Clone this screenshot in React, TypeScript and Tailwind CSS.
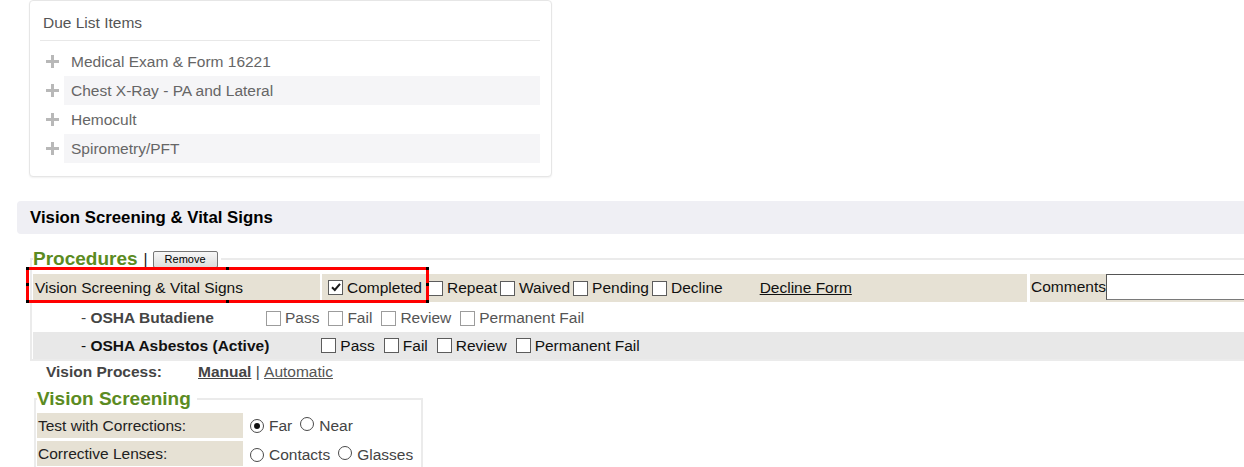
import React from "react";

const DUE_ITEMS = [
  "Medical Exam & Form 16221",
  "Chest X-Ray - PA and Lateral",
  "Hemocult",
  "Spirometry/PFT",
];

const RESULT_OPTIONS = ["Pass", "Fail", "Review", "Permanent Fail"];

function PlusIcon() {
  return (
    <svg width="13" height="13" viewBox="0 0 13 13" aria-hidden="true">
      <rect x="5" y="0" width="3" height="13" fill="#b8b8b8" />
      <rect x="0" y="5" width="13" height="3" fill="#b8b8b8" />
    </svg>
  );
}

function CheckBox({ checked = false, light = false }: { checked?: boolean; light?: boolean }) {
  return (
    <span
      className={
        light
          ? "inline-flex items-center justify-center w-[15px] h-[15px] shrink-0 border border-[#9c9c9c] bg-white"
          : "inline-flex items-center justify-center w-[15px] h-[15px] shrink-0 border border-[#5c5c5c] bg-white"
      }
    >
      {checked && (
        <svg width="12" height="12" viewBox="0 0 12 12" aria-hidden="true">
          <path d="M2 6.2 L4.8 9 L10 2.8" fill="none" stroke="#1a1a1a" strokeWidth="2" />
        </svg>
      )}
    </span>
  );
}

function Radio({ checked = false }: { checked?: boolean }) {
  return (
    <span className="inline-flex items-center justify-center w-[14px] h-[14px] shrink-0 rounded-full border border-[#4a4a4a] bg-white">
      {checked && <span className="w-[6px] h-[6px] rounded-full bg-[#111]" />}
    </span>
  );
}

function DueListCard() {
  return (
    <div className="ml-[29px] w-[523px] h-[177px] border border-[#e6e6e6] rounded-[4px] bg-white pl-[10px] pr-[11px] pt-[12px] shadow-[0_1px_2px_rgba(0,0,0,0.06)]">
      <div className="h-[20px] leading-[20px] pl-[3px] text-[#555] border-b border-[#e8e8e8] box-content pb-[7px]">
        Due List Items
      </div>
      <div className="mt-[6px]">
        {DUE_ITEMS.map((item, i) => (
          <div key={item} className="flex h-[29px]">
            <div className="w-[24px] flex items-center justify-center">
              <PlusIcon />
            </div>
            <div
              className={
                i % 2 === 1
                  ? "flex-1 flex items-center pl-[7px] text-[#666] bg-[#f5f5f7]"
                  : "flex-1 flex items-center pl-[7px] text-[#666]"
              }
            >
              {item}
            </div>
          </div>
        ))}
      </div>
    </div>
  );
}

function ResultRow({ label, shaded }: { label: string; shaded?: boolean }) {
  return (
    <div
      className={
        shaded
          ? "flex items-center h-[27px] pl-[48px] bg-[#e8e8e8] text-[#111]"
          : "flex items-center h-[28px] mt-[2px] pl-[48px] text-[#555]"
      }
    >
      <span className={shaded ? "text-[#111]" : "text-[#444]"}>
        - <b>{label}</b>
      </span>
      <div className="flex items-center ml-[52px]">
        {RESULT_OPTIONS.map((opt, i) => (
          <span key={opt} className={i === 0 ? "flex items-center" : "flex items-center ml-[9px]"}>
            <CheckBox light={!shaded} />
            <span className="ml-[4px]">{opt}</span>
          </span>
        ))}
      </div>
    </div>
  );
}

function Procedures() {
  const statuses = ["Repeat", "Waived", "Pending", "Decline"];
  return (
    <fieldset className="ml-[30px] mt-[14px] w-[1260px] border-2 border-[#ebebeb] pl-[1px] pt-[4px]">
      <legend className="h-[22px] flex items-center pl-0 pr-[3px]">
        <span className="text-[19px] font-bold text-[#5b8b22] leading-[22px]">Procedures</span>
        <span className="ml-[6px] text-[#111]">|</span>
        <button className="ml-[5px] w-[65px] h-[17px] text-[11px] leading-[15px] text-black border border-[#767676] rounded-[2px] bg-gradient-to-b from-[#f7f7f7] to-[#dddddd]">
          Remove
        </button>
      </legend>

      <div className="flex h-[28px] text-[#111]">
        <div className="w-[287px] flex items-center pl-[2px] bg-[#e6e1d4]">Vision Screening &amp; Vital Signs</div>
        <div className="ml-[2px] w-[705px] flex items-center bg-[#e6e1d4]">
          <span className="ml-[6px]">
            <CheckBox checked />
          </span>
          <span className="ml-[4px]">Completed</span>
          {statuses.map((s, i) => (
            <span key={s} className={i === 0 ? "flex items-center ml-[6px]" : "flex items-center ml-[3px]"}>
              <CheckBox />
              <span className="ml-[4px]">{s}</span>
            </span>
          ))}
          <span className="ml-[37px] underline">Decline Form</span>
        </div>
        <div className="ml-[3px] flex-1 flex items-start bg-[#e6e1d4]">
          <span className="pl-[1px] h-[28px] leading-[26px]">Comments</span>
          <input
            readOnly
            className="w-[220px] h-[26px] border border-[#7a7a7a] border-t-[#555] border-l-[#555] bg-white"
          />
        </div>
      </div>

      <ResultRow label="OSHA Butadiene" />
      <ResultRow label="OSHA Asbestos (Active)" shaded />
    </fieldset>
  );
}

function VisionScreening() {
  return (
    <fieldset className="ml-[34px] mt-[5px] w-[389px] border-2 border-[#ebebeb] pl-[1px] pt-[3px] pb-[10px]">
      <legend className="pl-0 pr-[6px] text-[19px] leading-[22px] font-bold text-[#5b8b22]">Vision Screening</legend>
      <div className="flex h-[25px]">
        <div className="w-[206px] flex items-center pl-[1px] bg-[#e6e1d4] text-[#222]">Test with Corrections:</div>
        <div className="ml-[2px] flex items-center pl-[5px] text-[#444]">
          <Radio checked />
          <span className="ml-[5px]">Far</span>
          <span className="ml-[8px]">
            <Radio />
          </span>
          <span className="ml-[5px]">Near</span>
        </div>
      </div>
      <div className="flex h-[25px] mt-[3px]">
        <div className="w-[206px] flex items-center pl-[1px] bg-[#e6e1d4] text-[#222]">Corrective Lenses:</div>
        <div className="ml-[2px] flex items-center pl-[5px] pt-[3px] text-[#444]">
          <Radio />
          <span className="ml-[5px]">Contacts</span>
          <span className="ml-[8px]">
            <Radio />
          </span>
          <span className="ml-[5px]">Glasses</span>
        </div>
      </div>
    </fieldset>
  );
}

export default function App() {
  return (
    <div className="relative w-[1244px] h-[467px] overflow-hidden bg-white text-[15.5px] font-['Liberation_Sans',Arial,sans-serif]">
      <DueListCard />

      <div className="ml-[17px] mt-[24px] h-[33px] flex items-center pl-[13px] bg-[#efeff4] rounded-l-[4px] text-[16.8px] font-bold text-black">
        Vision Screening &amp; Vital Signs
      </div>

      <Procedures />

      <div className="h-[22px] flex items-center pl-[46px] text-[#444]">
        <b>Vision Process:</b>
        <b className="ml-[36px] underline">Manual</b>
        <span className="whitespace-pre"> | </span>
        <span className="underline text-[#555]">Automatic</span>
      </div>

      <VisionScreening />

      {/* selection overlay around the first procedure row */}
      <div className="absolute left-[26px] top-[267px] w-[403px] h-[36px] border-[3px] border-[#ff0000]">
        <span className="absolute -left-[3px] -top-[3px] w-[3px] h-[3px] bg-black" />
        <span className="absolute -right-[3px] -top-[3px] w-[3px] h-[3px] bg-black" />
        <span className="absolute -left-[3px] -bottom-[3px] w-[3px] h-[3px] bg-black" />
        <span className="absolute -right-[3px] -bottom-[3px] w-[3px] h-[3px] bg-black" />
        <span className="absolute left-[197px] -top-[3px] w-[3px] h-[3px] bg-black" />
        <span className="absolute left-[197px] -bottom-[3px] w-[3px] h-[3px] bg-black" />
        <span className="absolute -left-[3px] top-[13px] w-[3px] h-[3px] bg-black" />
        <span className="absolute -right-[3px] top-[13px] w-[3px] h-[3px] bg-black" />
      </div>
    </div>
  );
}
